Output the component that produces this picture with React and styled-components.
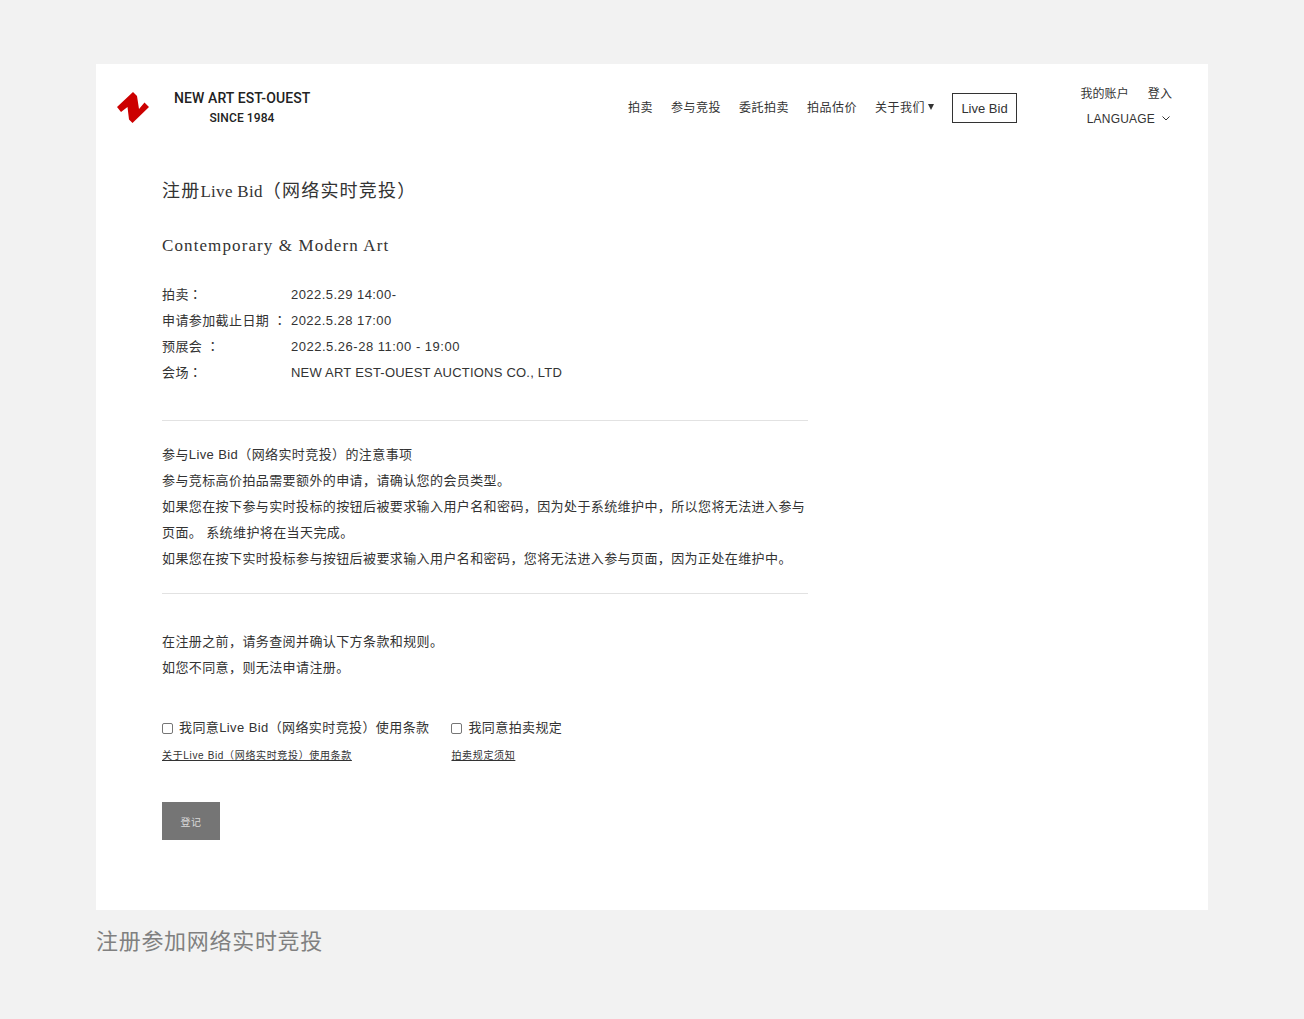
import React from 'react';
import styled, { createGlobalStyle } from 'styled-components';

const sans = '"Liberation Sans", "Noto Sans CJK SC", sans-serif';
const serif = '"Liberation Serif", "Noto Sans CJK SC", serif';

const GlobalStyle = createGlobalStyle`
  html, body { margin: 0; padding: 0; background: #f2f2f2; }
  body { font-family: ${sans}; color: #333; }
`;

const Page = styled.div`
  width: 1304px;
  height: 1019px;
  box-sizing: border-box;
  padding: 64px 96px 0;
  overflow: hidden;
`;

const Card = styled.div`
  width: 1112px;
  height: 846px;
  background: #fff;
  display: flex;
  flex-direction: column;
`;

const Caption = styled.div`
  margin-top: 18px;
  font-size: 22px;
  line-height: 28px;
  letter-spacing: 0.7px;
  color: #808080;
`;

const Header = styled.header`
  height: 88px;
  display: flex;
  align-items: center;
  padding-left: 21px;
`;

const Brand = styled.div`
  display: flex;
  align-items: center;
  gap: 25px;
`;

const BrandText = styled.div`
  width: 136px;
  text-align: center;
  font-weight: 500;
  white-space: nowrap;
  color: #222;
  font-family: "Roboto", ${sans};
`;

const BrandLine = styled.div`
  line-height: 20px;
  font-size: ${(p) => (p.$small ? '12px' : '14px')};
  letter-spacing: 0.1px;
`;

const Nav = styled.nav`
  margin-left: auto;
  display: flex;
  align-items: center;
  gap: 18px;
`;

const NavItem = styled.a`
  display: flex;
  align-items: center;
  margin-bottom: 3px;
  font-size: 12px;
  letter-spacing: 0.5px;
  white-space: nowrap;
  color: #333;
`;

const Caret = styled.span`
  width: 0;
  height: 0;
  margin-left: 3px;
  border-left: 3px solid transparent;
  border-right: 3px solid transparent;
  border-top: 6px solid #333;
`;

const LiveBid = styled.a`
  box-sizing: border-box;
  width: 65px;
  height: 30px;
  border: 1px solid #333;
  display: flex;
  align-items: center;
  justify-content: center;
  font-size: 13px;
  color: #333;
`;

const Account = styled.div`
  width: 92px;
  margin: 0 36px 4px 63px;
  display: flex;
  flex-direction: column;
  align-items: flex-end;
  gap: 7px;
  white-space: nowrap;
`;

const AccountLinks = styled.div`
  display: flex;
  gap: 19px;
  font-size: 12px;
  line-height: 18px;
  letter-spacing: 0.1px;
`;

const Language = styled.div`
  display: flex;
  align-items: center;
  gap: 7px;
  font-size: 12px;
  line-height: 18px;
  letter-spacing: 0.2px;
  padding-right: 2px;
`;

const Content = styled.main`
  padding: 23px 0 0 66px;
  width: 646px;
  font-size: 13px;
  letter-spacing: 0.4px;
  line-height: 26px;
`;

const Title = styled.h1`
  margin: 0;
  font-family: ${serif};
  font-weight: 400;
  font-size: 18px;
  line-height: 32px;
  letter-spacing: 1.2px;
  color: #333;
`;

const TitleLatin = styled.span`
  font-size: 17px;
  letter-spacing: 0.3px;
`;

const Subtitle = styled.h2`
  margin: 22px 0 0;
  font-family: ${serif};
  font-weight: 400;
  font-size: 17px;
  line-height: 32px;
  letter-spacing: 1.1px;
  color: #333;
`;

const Details = styled.div`
  margin-top: 20px;
`;

const DetailRow = styled.div`
  display: grid;
  grid-template-columns: 129px 1fr;
  height: 26px;
`;

const DetailValue = styled.span`
  letter-spacing: ${(p) => p.$tracking}px;
`;

const Colon = styled.span`
  font-family: "Noto Sans CJK TC", sans-serif;
  line-height: 0;
`;

const Divider = styled.hr`
  margin: ${(p) => p.$top}px 0 ${(p) => p.$bottom}px;
  border: 0;
  border-top: 1px solid #e2e2e2;
`;

const Paragraph = styled.p`
  margin: 0;
`;

const Agreements = styled.div`
  margin-top: 34px;
  display: flex;
  gap: 22px;
`;

const Agreement = styled.div`
  display: flex;
  flex-direction: column;
  align-items: flex-start;
`;

const CheckLabel = styled.label`
  display: flex;
  align-items: center;
  gap: 6px;
  line-height: 26px;
`;

const Check = styled.input`
  appearance: none;
  box-sizing: border-box;
  width: 11px;
  height: 11px;
  margin: 0;
  background: #fff;
  border: 1px solid #767676;
  border-radius: 2px;
`;

const TermsLink = styled.a`
  margin-top: 2px;
  font-size: 10px;
  line-height: 26px;
  letter-spacing: 0.65px;
  text-decoration: underline;
  color: #333;
`;

const Submit = styled.button`
  display: block;
  margin-top: 33px;
  width: 58px;
  height: 38px;
  padding: 0;
  border: 0;
  background: #757575;
  color: #d9d9d9;
  font-family: ${sans};
  font-size: 10px;
  letter-spacing: 0.5px;
`;

const Logo = () => (
  <svg width="32" height="32" viewBox="0 0 32 32">
    <path
      d="M0 15 L16 0 L20 4 L22 17 L27.5 10.5 L32 15 L15.5 31 L12 27.5 L10.5 15 L4 20 Z"
      fill="#cc0000"
    />
  </svg>
);

const Chevron = () => (
  <svg width="8" height="5" viewBox="0 0 8 5" fill="none">
    <path d="M0.5 0.5 L4 4 L7.5 0.5" stroke="#333" strokeWidth="1" />
  </svg>
);

const details = [
  ['拍卖', '', '2022.5.29 14:00-', 0.45],
  ['申请参加截止日期', ' ', '2022.5.28 17:00', 0.45],
  ['预展会', ' ', '2022.5.26-28 11:00 - 19:00', 0.5],
  ['会场', '', 'NEW ART EST-OUEST AUCTIONS CO., LTD', 0.22],
];

const navItems = ['拍卖', '参与竞投', '委託拍卖', '拍品估价'];

const App = () => (
  <Page>
    <GlobalStyle />
    <Card>
      <Header>
        <Brand>
          <Logo />
          <BrandText>
            <BrandLine>NEW ART EST-OUEST</BrandLine>
            <BrandLine $small>SINCE 1984</BrandLine>
          </BrandText>
        </Brand>
        <Nav>
          {navItems.map((item) => (
            <NavItem key={item}>{item}</NavItem>
          ))}
          <NavItem>
            关于我们
            <Caret />
          </NavItem>
          <LiveBid>Live Bid</LiveBid>
        </Nav>
        <Account>
          <AccountLinks>
            <span>我的账户</span>
            <span>登入</span>
          </AccountLinks>
          <Language>
            LANGUAGE <Chevron />
          </Language>
        </Account>
      </Header>
      <Content>
        <Title>
          注册<TitleLatin>Live Bid</TitleLatin>（网络实时竞投）
        </Title>
        <Subtitle>Contemporary &amp; Modern Art</Subtitle>
        <Details>
          {details.map(([label, space, value, tracking]) => (
            <DetailRow key={label}>
              <span>
                {label}
                {space}
                <Colon>：</Colon>
              </span>
              <DetailValue $tracking={tracking}>{value}</DetailValue>
            </DetailRow>
          ))}
        </Details>
        <Divider $top={34} $bottom={21} />
        <Paragraph>参与Live Bid（网络实时竞投）的注意事项</Paragraph>
        <Paragraph>参与竞标高价拍品需要额外的申请，请确认您的会员类型。</Paragraph>
        <Paragraph>如果您在按下参与实时投标的按钮后被要求输入用户名和密码，因为处于系统维护中，所以您将无法进入参与页面。 系统维护将在当天完成。</Paragraph>
        <Paragraph>如果您在按下实时投标参与按钮后被要求输入用户名和密码，您将无法进入参与页面，因为正处在维护中。</Paragraph>
        <Divider $top={21} $bottom={35} />
        <Paragraph>在注册之前，请务查阅并确认下方条款和规则。</Paragraph>
        <Paragraph>如您不同意，则无法申请注册。</Paragraph>
        <Agreements>
          <Agreement>
            <CheckLabel>
              <Check type="checkbox" />
              我同意Live Bid（网络实时竞投）使用条款
            </CheckLabel>
            <TermsLink>关于Live Bid（网络实时竞投）使用条款</TermsLink>
          </Agreement>
          <Agreement>
            <CheckLabel>
              <Check type="checkbox" />
              我同意拍卖规定
            </CheckLabel>
            <TermsLink>拍卖规定须知</TermsLink>
          </Agreement>
        </Agreements>
        <Submit>登记</Submit>
      </Content>
    </Card>
    <Caption>注册参加网络实时竞投</Caption>
  </Page>
);

export default App;
